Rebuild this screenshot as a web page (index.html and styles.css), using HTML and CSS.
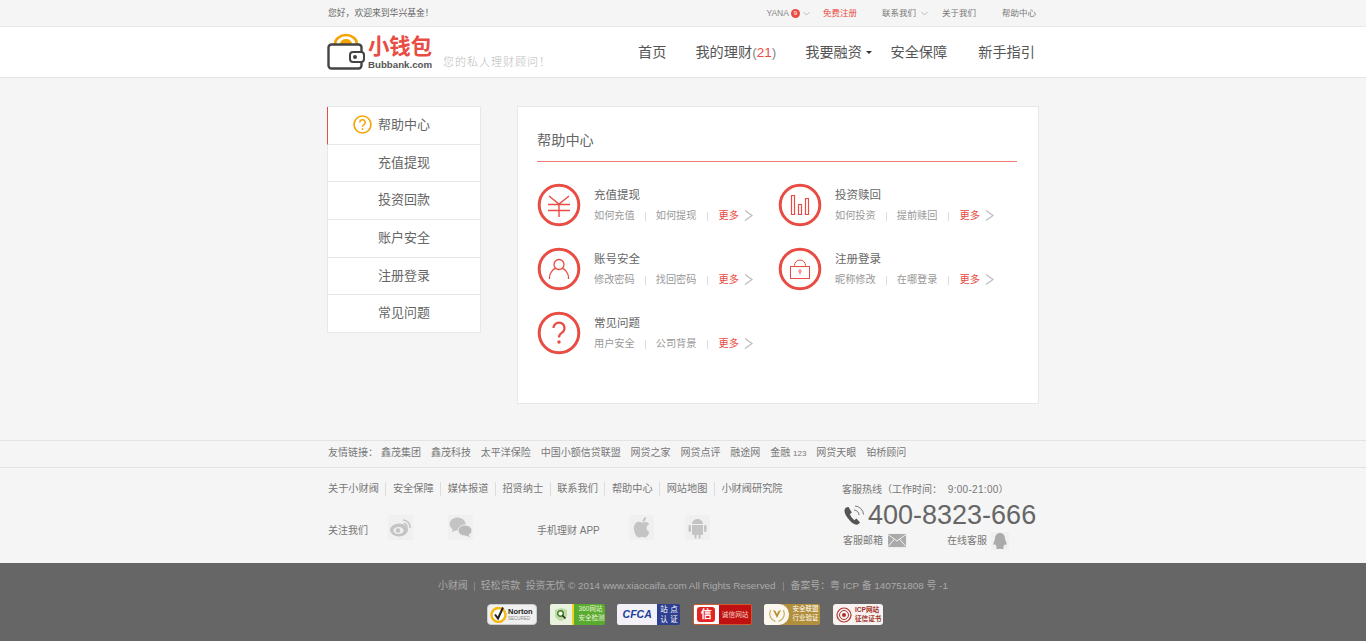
FILE: index.html
```html
<!DOCTYPE html>
<html lang="zh-CN">
<head>
<meta charset="utf-8">
<title>帮助中心</title>
<link rel="stylesheet" href="styles.css">
</head>
<body>
<div class="topbar"><div class="wrap topbar-in">
  <span class="hello">您好，欢迎来到华兴基金！</span>
  <div class="top-links">
    <span class="t-user">YANA</span><span class="t-badge">9</span><svg class="chev" width="7" height="5" viewBox="0 0 7 5"><path d="M.5 1l3 3 3-3" fill="none" stroke="#bbb"/></svg>
    <a class="t-reg">免费注册</a>
    <a class="t-contact">联系我们</a><svg class="chev" width="7" height="5" viewBox="0 0 7 5"><path d="M.5 1l3 3 3-3" fill="none" stroke="#bbb"/></svg>
    <a class="t-about">关于我们</a>
    <a class="t-help">帮助中心</a>
  </div>
</div></div>

<header class="header"><div class="wrap header-in">
  <div class="logo">
    <svg class="logo-mark" width="38" height="38" viewBox="0 0 38 38">
      <path d="M8 12a11 9 0 0 1 22 0" fill="none" stroke="#f5a300" stroke-width="2.6"/>
      <path d="M13 12a6 5 0 0 1 12 0z" fill="#f5a300"/>
      <rect x="1.5" y="12.5" width="33" height="24" rx="3" fill="#fff" stroke="#444" stroke-width="2.4"/>
      <rect x="23" y="20" width="14" height="10" rx="3" fill="#fff" stroke="#444" stroke-width="2"/>
      <circle cx="28" cy="25" r="2" fill="#444"/>
    </svg>
    <div class="logo-text"><span class="logo-cn">小钱包</span><span class="logo-en">Bubbank.com</span></div>
    <span class="slogan">您的私人理财顾问！</span>
  </div>
  <nav class="nav">
    <a class="n-home">首页</a>
    <a>我的理财<span class="paren">(<em>21</em>)</span></a>
    <a class="has-caret">我要融资<i class="caret"></i></a>
    <a class="n-safe">安全保障</a>
    <a>新手指引</a>
  </nav>
</div></header>

<main class="wrap main">
  <aside class="side">
    <a class="side-item active"><svg class="side-icon" width="19" height="19" viewBox="0 0 19 19"><circle cx="9.5" cy="9.5" r="8.5" fill="none" stroke="#f5a300" stroke-width="1.6"/><path d="M6.8 7.4a2.7 2.7 0 1 1 4 2.4c-.9.5-1.3 1-1.3 2" fill="none" stroke="#f5a300" stroke-width="1.4"/><circle cx="9.5" cy="14" r=".9" fill="#f5a300"/></svg>帮助中心</a>
    <a class="side-item">充值提现</a>
    <a class="side-item">投资回款</a>
    <a class="side-item">账户安全</a>
    <a class="side-item">注册登录</a>
    <a class="side-item">常见问题</a>
  </aside>
  <section class="panel">
    <h1 class="panel-title">帮助中心</h1>
    <div class="topics">
      <div class="topic">
        <svg class="ticon" width="44" height="44" viewBox="0 0 44 44"><circle cx="22" cy="22" r="19.8" fill="none" stroke="#e94c43" stroke-width="3"/><path d="M12 13l10 8 10-8M11 21.500h22M11 27.500h22M22 21v13" fill="none" stroke="#e94c43" stroke-width="1.4"/></svg>
        <div class="tbody"><h2>充值提现</h2><p><a>如何充值</a><i></i><a>如何提现</a><i></i><a class="more">更多</a><svg class="arr" width="9" height="11" viewBox="0 0 9 11"><path d="M1 .5l7 5-7 5" fill="none" stroke="#bbb" stroke-width="1.2"/></svg></p></div>
      </div>
      <div class="topic">
        <svg class="ticon" width="44" height="44" viewBox="0 0 44 44"><circle cx="22" cy="22" r="19.800" fill="none" stroke="#e94c43" stroke-width="3"/><path d="M13.500 12.500h3v19h-3zM20.500 21.500h3v10h-3zM27.500 15.500h3v16h-3z" fill="none" stroke="#e94c43" stroke-width="1.200"/></svg>
        <div class="tbody"><h2>投资赎回</h2><p><a>如何投资</a><i></i><a>提前赎回</a><i></i><a class="more">更多</a><svg class="arr" width="9" height="11" viewBox="0 0 9 11"><path d="M1 .5l7 5-7 5" fill="none" stroke="#bbb" stroke-width="1.2"/></svg></p></div>
      </div>
      <div class="topic">
        <svg class="ticon" width="44" height="44" viewBox="0 0 44 44"><circle cx="22" cy="22" r="19.800" fill="none" stroke="#e94c43" stroke-width="3"/><circle cx="22" cy="17.500" r="5" fill="none" stroke="#e94c43" stroke-width="1.300"/><path d="M12.500 32v-1.500c0-5 4-8.500 6-9M31.500 32v-1.500c0-5-4-8.500-6-9" fill="none" stroke="#e94c43" stroke-width="1.300"/></svg>
        <div class="tbody"><h2>账号安全</h2><p><a>修改密码</a><i></i><a>找回密码</a><i></i><a class="more">更多</a><svg class="arr" width="9" height="11" viewBox="0 0 9 11"><path d="M1 .5l7 5-7 5" fill="none" stroke="#bbb" stroke-width="1.2"/></svg></p></div>
      </div>
      <div class="topic">
        <svg class="ticon" width="44" height="44" viewBox="0 0 44 44"><circle cx="22" cy="22" r="19.800" fill="none" stroke="#e94c43" stroke-width="3"/><rect x="12.500" y="19.500" width="19" height="12" fill="none" stroke="#e94c43"/><path d="M16.500 19.500v-1a5.500 5.500 0 0 1 11 0v1" fill="none" stroke="#e94c43"/><circle cx="22" cy="24" r="1.200" fill="none" stroke="#e94c43" stroke-width=".8"/><path d="M22 25v2.500" stroke="#e94c43" stroke-width=".8"/></svg>
        <div class="tbody"><h2>注册登录</h2><p><a>昵称修改</a><i></i><a>在哪登录</a><i></i><a class="more">更多</a><svg class="arr" width="9" height="11" viewBox="0 0 9 11"><path d="M1 .5l7 5-7 5" fill="none" stroke="#bbb" stroke-width="1.2"/></svg></p></div>
      </div>
      <div class="topic">
        <svg class="ticon" width="44" height="44" viewBox="0 0 44 44"><circle cx="22" cy="22" r="19.800" fill="none" stroke="#e94c43" stroke-width="3"/><path d="M16.500 17a5.500 5.500 0 1 1 8.500 4.700c-2 1.300-3 2.300-3 4.800" fill="none" stroke="#e94c43" stroke-width="2.200"/><circle cx="22" cy="31" r="1.700" fill="#e94c43"/></svg>
        <div class="tbody"><h2>常见问题</h2><p><a>用户安全</a><i></i><a>公司背景</a><i></i><a class="more">更多</a><svg class="arr" width="9" height="11" viewBox="0 0 9 11"><path d="M1 .5l7 5-7 5" fill="none" stroke="#bbb" stroke-width="1.2"/></svg></p></div>
      </div>
    </div>
  </section>
</main>

<div class="friends"><div class="wrap friends-in">
  <span>友情链接：</span><a class="first">鑫茂集团</a><a>鑫茂科技</a><a>太平洋保险</a><a>中国小额信贷联盟</a><a>网贷之家</a><a>网贷点评</a><a>融途网</a><a>金融 <span class="num">123</span></a><a>网贷天眼</a><a>铂桥顾问</a>
</div></div>

<footer class="foot"><div class="wrap foot-in">
  <div class="foot-left">
    <div class="foot-links"><a>关于小财阀</a><a>安全保障</a><a>媒体报道</a><a>招贤纳士</a><a>联系我们</a><a>帮助中心</a><a>网站地图</a><a>小财阀研究院</a></div>
    <div class="follow">
      <span class="f-label">关注我们</span>
      <span class="sq s-weibo"><svg width="25" height="25" viewBox="0 0 25 25"><ellipse cx="11" cy="15" rx="9" ry="6.500" fill="#c4c4c4"/><ellipse cx="10.500" cy="15.500" rx="5" ry="3.600" fill="#f0f0f0"/><circle cx="10" cy="15.500" r="2.300" fill="#c4c4c4"/><path d="M15 5a7 7 0 0 1 7 8M15.500 8.500a3.500 3.500 0 0 1 3.500 4" fill="none" stroke="#c4c4c4" stroke-width="1.500"/></svg></span>
      <span class="sq s-wechat"><svg width="25" height="25" viewBox="0 0 25 25"><ellipse cx="9.500" cy="9" rx="8" ry="6.500" fill="#c4c4c4"/><path d="M5 13l-1 4 5-2z" fill="#c4c4c4"/><ellipse cx="17" cy="15.500" rx="7" ry="5.500" fill="#bbb" stroke="#f0f0f0"/><path d="M20 19l2 3-5-1.500z" fill="#bbb"/></svg></span>
      <span class="f-label f-app">手机理财 APP</span>
      <span class="sq s-apple"><svg width="25" height="25" viewBox="0 0 25 25"><path d="M17 2c-2 .2-3.600 2.500-3.400 5 2 0 3.600-2.500 3.400-5zM13 7.500c-2-1-3.200-1-4.500-.5C5.500 8 4.500 12 5 15c.5 3 2.500 7.500 5 7.500 1.300 0 1.800-.8 3-.8s1.700.8 3 .8c2 0 3.500-3 4.300-5.500-3.500-1.500-3.500-6.500 0-8-1.500-2-4.500-2.300-6-1.500-.5.300-.8.300-1.300 0z" fill="#c4c4c4"/></svg></span>
      <span class="sq s-android"><svg width="25" height="25" viewBox="0 0 25 25"><path d="M7 9a5.500 5 0 0 1 11 0z" fill="#c4c4c4"/><path d="M7 10h11v9a1 1 0 0 1-1 1h-1.500v3.500h-2V20h-2v3.500h-2V20H8a1 1 0 0 1-1-1z" fill="#c4c4c4"/><rect x="3.500" y="10" width="2.500" height="7" rx="1.200" fill="#c4c4c4"/><rect x="19" y="10" width="2.500" height="7" rx="1.200" fill="#c4c4c4"/></svg></span>
    </div>
  </div>
  <div class="foot-right">
    <div class="hot">客服热线（工作时间： <span>9:00-21:00</span>）</div>
    <div class="phone"><svg width="22" height="22" viewBox="0 0 22 22"><path d="M3 3.500C1 5 1 8 3 11.500s6 8 9.500 9c2 .5 3.500-.5 4.500-2l-3.500-4-2 1.500c-1.500-.5-4.500-4.500-4.500-6l1.800-1.500L5.500 3z" fill="#555"/><path d="M11 6a5 5 0 0 1 5 5M12 2a9 9 0 0 1 8.500 8.500" fill="none" stroke="#777"/></svg><span>400-8323-666</span></div>
    <div class="svc">
      <span>客服邮箱</span><span class="sq m"><svg width="18" height="13" viewBox="0 0 18 13"><rect width="18" height="13" fill="#aaa"/><path d="M0 .5l9 6.500 9-6.500M0 12.500l6.500-7.500M18 12.500l-6.500-7.500" fill="none" stroke="#f0f0f0"/></svg></span>
      <span class="svc-b">在线客服</span><span class="sq q"><svg width="18" height="18" viewBox="0 0 18 18"><path d="M9 1c-3.200 0-5 2.500-5 5.500 0 1-.300 1.500-1 3-.7 1.800-.800 3.500 0 3.500.5 0 1-.8 1.200-1 .3 1.300 1 2.200 2 3-1.500.5-1.500 2 1 2 1.200 0 1.500-.300 1.800-.500.300.200.600.500 1.800.500 2.500 0 2.500-1.500 1-2 1-.8 1.700-1.700 2-3 .2.200.7 1 1.200 1 .8 0 .7-1.700 0-3.500-.7-1.500-1-2-1-3C14 3.500 12.200 1 9 1z" fill="#aaa"/></svg></span>
    </div>
  </div>
</div></footer>

<div class="copy">
  <p class="copy-line"><span>小财阀</span><i></i><span>轻松贷款&nbsp; 投资无忧 © 2014 www.xiaocaifa.com All Rights Reserved</span><i class="w"></i><span>备案号：粤 ICP 备 140751808 号 -1</span></p>
  <div class="seals">
    <span class="seal norton"><svg width="17" height="17" viewBox="0 0 17 17"><circle cx="8.500" cy="9" r="7" fill="#fff" stroke="#f5b90f" stroke-width="2.500"/><path d="M5 8.500l3 4 5-11" fill="none" stroke="#222" stroke-width="2"/></svg><span class="n-t"><b>Norton</b><small>SECURED</small></span></span>
    <span class="seal s360"><span class="s360-l"><svg width="14" height="15" viewBox="0 0 14 15"><path d="M7 1l6 2v5c0 3-3 5-6 6-3-1-6-3-6-6V3z" fill="#bcd9a6"/><circle cx="6.500" cy="6.500" r="2.800" fill="#fff" stroke="#3b7d1e" stroke-width="1.400"/><path d="M8.500 8.500l3 3" stroke="#222" stroke-width="1.500"/></svg></span><span class="s360-r">360网站<br>安全检测</span></span>
    <span class="seal cfca"><b>CFCA</b><span>站点<br>认证</span></span>
    <span class="seal xin"><span class="xin-l"><span class="xin-mark">信</span></span><span class="xin-r">诚信网站</span></span>
    <span class="seal gold"><span class="gold-l"><svg width="18" height="17" viewBox="0 0 18 17"><path d="M2.500 4c-2 5 0 10 5 11.500M15.500 4c2 5 0 10-5 11.500" fill="none" stroke="#c9ad6a" stroke-width="1.200"/><path d="M5 4l4 8 4-8-2.500 1L9 8 7.500 5z" fill="#b8902f"/></svg></span><span class="gold-r">安全联盟<br>行业验证</span></span>
    <span class="seal icp"><svg width="16" height="16" viewBox="0 0 16 16"><circle cx="8" cy="8" r="7" fill="none" stroke="#b3322c" stroke-width="1.200"/><circle cx="8" cy="8" r="4.500" fill="none" stroke="#b3322c"/><circle cx="8" cy="8" r="2" fill="#b3322c"/></svg><span>ICP网站<br>征信证书</span></span>
  </div>
</div>
</body>
</html>
```
FILE: styles.css
```css
* { box-sizing: border-box; }
html, body { margin: 0; padding: 0; }
body {
  background: #f5f5f5;
  color: #666;
  font-family: "Liberation Sans", "Noto Sans CJK SC", sans-serif;
  height: 641px;
  overflow: hidden;
}
a { color: inherit; text-decoration: none; }
.wrap { width: 712px; margin-left: 327px; }

.topbar { height: 27px; border-bottom: 1px solid #e8e8e8; font-size: 9px; line-height: 26px; color: #666; }
.topbar-in { display: flex; justify-content: space-between; }
.hello { margin-left: 1px; font-size: 8.800px; }
.top-links { display: flex; align-items: center; height: 26px; padding-right: 3px; font-size: 8.500px; color: #777; }
.t-user { color: #888; }
.t-badge { width: 9px; height: 9px; margin-left: 2px; border-radius: 50%; background: #e94c43; color: #fff; font-size: 6px; line-height: 9px; text-align: center; }
.chev { margin-left: 3px; }
.t-reg { margin-left: 13px; color: #e94c43; }
.t-contact { margin-left: 25px; margin-right: 2px; }
.t-about { margin-left: 14px; }
.t-help { margin-left: 26px; }

.header { height: 51px; background: #fff; border-bottom: 1px solid #e6e6e6; }
.header-in { display: flex; justify-content: space-between; align-items: center; height: 50px; }
.logo { display: flex; align-items: flex-end; height: 50px; position: relative; }
.logo-mark { margin-bottom: 7px; }
.logo-text { display: flex; flex-direction: column; margin-left: 3px; margin-bottom: 7px; }
.logo-cn { font-size: 21.500px; line-height: 23px; font-weight: 700; color: #e94c43; letter-spacing: -.3px; }
.logo-en { font-size: 9.700px; line-height: 11px; font-weight: 700; color: #555; }
.slogan { margin-left: 11px; margin-bottom: 9px; font-size: 11px; letter-spacing: 1px; line-height: 14px; color: #bbb; font-family: "Noto Sans CJK SC", sans-serif; font-weight: 300; }
.nav { display: flex; align-items: center; padding: 0 4px 2px 0; gap: 30px; font-size: 14.200px; color: #555; }
.n-home { margin-right: -1px; }
.n-safe { margin-right: 1px; }
.paren { color: #888; font-size: 13.500px; }
.paren em { font-style: normal; color: #e94c43; }
.has-caret { display: flex; align-items: center; margin: 0 -10.500px 0 -1px; }
.caret { width: 0; height: 0; margin: 2px -1px 0 4px; border-style: solid; border-width: 3px 3px 0; border-color: #333 transparent transparent; }

.main { display: flex; align-items: flex-start; margin-top: 28px; height: 334px; }
.side { width: 154px; background: #fff; border: 1px solid #e8e8e8; border-width: 1px 1px 0; }
.side-item { display: flex; align-items: center; height: 37.700px; padding: 0 0 4px 50px; border-bottom: 1px solid #e8e8e8; font-size: 13px; color: #666; position: relative; }
.side-item.active { border-left: 1px solid #e94c43; margin-left: -1px; }
.side-icon { position: absolute; left: 25px; top: 8px; }
.panel { width: 522px; height: 298px; margin-left: 36px; padding: 0 20px 0 19px; background: #fff; border: 1px solid #e8e8e8; }
.panel-title { width: 480px; margin: 0; height: 55px; border-bottom: 1px solid #ee7d76; font-size: 14.200px; font-weight: 400; line-height: 67px; color: #666; }
.topics { display: grid; grid-template-columns: 241px 239px; grid-auto-rows: 64px; margin-top: 21px; }
.topic { display: flex; align-items: flex-start; }
.ticon { flex: none; }
.tbody { margin-left: 13px; }
.tbody h2 { margin: 4px 0 0; font-size: 11.500px; line-height: 16px; font-weight: 400; color: #666; }
.tbody p { display: flex; align-items: center; margin: 6px 0 0; font-size: 10.200px; line-height: 14px; color: #999; white-space: nowrap; }
.tbody p i { width: 1px; height: 9px; margin: 0 10px; background: #ddd; }
.tbody p .more { margin-left: 1px; color: #e94c43; }
.arr { margin: -2px 0 0 5px; }

.friends { height: 28px; border-top: 1px solid #e3e3e3; border-bottom: 1px solid #e3e3e3; }
.friends-in { display: flex; padding-left: 1px; font-size: 10px; line-height: 24px; color: #777; white-space: nowrap; }
.friends-in a { margin-left: 9.900px; }
.friends-in a.first { margin-left: 3px; }
.num { font-size: 8px; }

.foot { height: 95px; }
.foot-in { display: flex; justify-content: space-between; }
.foot-left { width: 515px; padding-left: 1px; }
.foot-links { display: flex; padding-top: 14px; font-size: 10.200px; line-height: 14px; color: #777; }
.foot-links a { padding-right: 6.500px; margin-right: 6.500px; border-right: 1px solid #ddd; }
.foot-links a:last-child { border: 0; }
.follow { display: flex; align-items: center; margin-top: 19px; font-size: 10px; color: #777; }
.f-label { padding-top: 3px; white-space: nowrap; }
.sq { display: block; background: #f0f0f0; }
.s-weibo { margin-left: 20px; height: 25px; }
.s-wechat { margin-left: 35px; height: 25px; }
.f-app { margin-left: 64px; }
.s-apple { margin-left: 29px; height: 25px; }
.s-android { margin-left: 31px; height: 25px; }
.foot-right { width: 197px; margin-right: 0; padding-top: 14px; font-size: 10px; color: #777; }
.hot { line-height: 15px; white-space: nowrap; }
.hot span { margin-left: 3px; font-size: 10px; letter-spacing: .3px; }
.phone { display: flex; align-items: center; height: 30px; margin-top: 3px; margin-left: 1px; }
.phone span { margin-left: 3px; font-size: 27px; line-height: 30px; color: #666; }
.svc { display: flex; align-items: center; margin-left: 1px; margin-top: 2px; line-height: 18px; }
.sq.m { margin-left: 5px; height: 16px; width: 19px; padding-top: 1px; }
.sq.q { margin-left: 4px; height: 18px; }
.svc-b { margin-left: 40px; }

.copy { height: 78px; background: #666; color: #aaa; overflow: hidden; }
.copy-line { display: flex; justify-content: center; align-items: center; margin: 16px 0 0; padding-left: 20px; font-size: 9.900px; line-height: 14px; white-space: nowrap; }
.copy-line i { width: 1px; height: 9px; margin: 0 6px; background: #888; }
.copy-line i.w { margin: 0 7px; }
.seals { display: flex; justify-content: center; gap: 12.600px; margin-top: 11px; padding-left: 4px; }
.seal { display: flex; height: 21px; overflow: hidden; border-radius: 2px; white-space: nowrap; }
.norton { width: 50px; align-items: center; padding-left: 2px; background: #f0f0f0; border: 1px solid #ccc; border-radius: 4px; color: #222; }
.n-t { display: flex; flex-direction: column; margin-left: 1px; line-height: 7px; font-size: 7px; }
.n-t b { font-size: 7.500px; }
.n-t small { font-size: 4.500px; color: #888; }
.s360 { width: 55px; background: #59ab2f; }
.s360-l { display: flex; align-items: center; justify-content: center; width: 24px; background: #e8f2de; border-right: 2px solid #f2d21f; }
.s360-r { padding: 1px 0 0 5px; font-size: 6.500px; line-height: 8.500px; color: #e8f5dc; }
.cfca { width: 63px; background: #2e3f8f; color: #fff; }
.cfca b { display: block; width: 41px; background: #f1f1f7; color: #1f3e9c; font-size: 10.500px; line-height: 21px; font-style: italic; text-align: center; }
.cfca span { padding: 1px 0 0 3px; font-size: 7.500px; line-height: 9.500px; letter-spacing: 2.500px; }
.xin { width: 59px; background: #bf1111; border: 1px solid #d05a30; }
.xin-l { display: flex; align-items: center; justify-content: center; width: 25px; background: #fff; }
.xin-mark { width: 18px; height: 15px; border-radius: 3px; background: #e52424; color: #fff; font-size: 11px; font-weight: 700; line-height: 15px; text-align: center; }
.xin-r { padding-left: 3px; font-size: 6.700px; line-height: 19px; color: #f5d6c8; }
.gold { width: 56px; background: #b28f3b; }
.gold-l { display: flex; align-items: center; justify-content: center; width: 25px; background: #fbf8ef; border-radius: 2px 10px 10px 2px; }
.gold-r { padding: 1px 0 0 3px; font-size: 6.500px; line-height: 8.500px; color: #fff; }
.icp { width: 50px; align-items: center; padding-left: 3px; background: #f6f3f1; color: #a2342c; border-radius: 3px; }
.icp span { margin-left: 3px; font-size: 6.600px; line-height: 8.500px; font-weight: 700; }
```
